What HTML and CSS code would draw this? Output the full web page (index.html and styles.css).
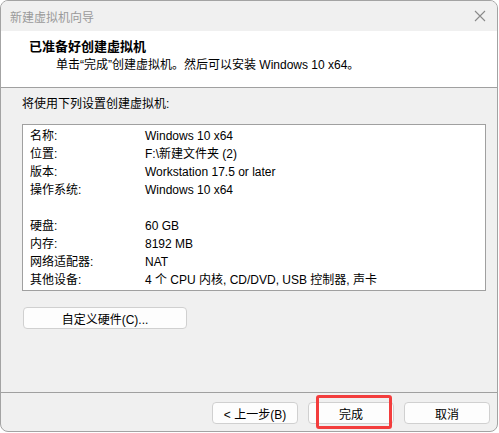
FILE: index.html
```html
<!DOCTYPE html>
<html lang="zh-CN">
<head>
<meta charset="utf-8">
<title>新建虚拟机向导</title>
<link rel="stylesheet" href="styles.css">
</head>
<body>
<div class="window">
  <div class="titlebar">
    <span class="title">新建虚拟机向导</span>
    <span class="close">
      <svg width="12" height="12" viewBox="0 0 12 12"><path d="M1 1 L11 11 M11 1 L1 11" stroke="#8a8a8a" stroke-width="1.1" fill="none"/></svg>
    </span>
  </div>
  <div class="header">
    <div class="h-title">已准备好创建虚拟机</div>
    <div class="h-sub">单击“完成”创建虚拟机。然后可以安装 Windows 10 x64。</div>
  </div>
  <div class="main">
    <div class="intro">将使用下列设置创建虚拟机:</div>
    <div class="summary">
      <div class="row"><span class="k">名称:</span><span class="v">Windows 10 x64</span></div>
      <div class="row"><span class="k">位置:</span><span class="v">F:\新建文件夹 (2)</span></div>
      <div class="row"><span class="k">版本:</span><span class="v">Workstation 17.5 or later</span></div>
      <div class="row"><span class="k">操作系统:</span><span class="v">Windows 10 x64</span></div>
      <div class="row"><span class="k"></span><span class="v"></span></div>
      <div class="row"><span class="k">硬盘:</span><span class="v">60 GB</span></div>
      <div class="row"><span class="k">内存:</span><span class="v">8192 MB</span></div>
      <div class="row"><span class="k">网络适配器:</span><span class="v">NAT</span></div>
      <div class="row"><span class="k">其他设备:</span><span class="v">4 个 CPU 内核, CD/DVD, USB 控制器, 声卡</span></div>
    </div>
    <button class="btn custom">自定义硬件(C)...</button>
  </div>
  <div class="footer">
    <button class="btn fbtn">&lt; 上一步(B)</button>
    <span class="mark-wrap">
      <button class="btn fbtn">完成</button>
      <span class="mark"></span>
    </span>
    <button class="btn fbtn">取消</button>
  </div>
</div>
</body>
</html>
```
FILE: styles.css
```css
html, body {
  margin: 0;
  padding: 0;
  background: #ffffff;
}
body {
  font-family: "Liberation Sans", "Noto Sans CJK SC", sans-serif;
  font-size: 12px;
  color: #000;
}
.window {
  width: 498px;
  height: 432px;
  box-sizing: border-box;
  border: 1px solid #a3a3a3;
  border-radius: 8px;
  overflow: hidden;
  background: #f0f0f0;
  display: flex;
  flex-direction: column;
}
.titlebar {
  height: 30px;
  flex: none;
  display: flex;
  align-items: center;
  justify-content: space-between;
  padding: 0 9px 0 9px;
  background: #f0f0f0;
}
.title {
  color: #9a9a9a;
  font-size: 12px;
}
.close {
  display: flex;
  width: 12px;
  height: 12px;
  margin-right: 2px;
}
.header {
  height: 56px;
  flex: none;
  background: #ffffff;
  border-bottom: 1px solid #a0a0a0;
  box-sizing: content-box;
}
.h-title {
  font-weight: bold;
  font-size: 13px;
  line-height: 18px;
  margin: 7px 0 0 28px;
}
.h-sub {
  line-height: 18px;
  margin-left: 55px;
}
.main {
  flex: 1;
  padding: 7px 11px 0 21px;
  display: flex;
  flex-direction: column;
  align-items: flex-start;
}
.intro {
  line-height: 18px;
}
.summary {
  align-self: stretch;
  margin-top: 11px;
  background: #ffffff;
  border: 1px solid #a0a0a0;
  padding: 2px 0 1px 0;
}
.row {
  display: flex;
  height: 18px;
  line-height: 18px;
}
.k {
  width: 115px;
  padding-left: 7px;
  flex: none;
}
.v {
  flex: 1;
}
.btn {
  font-family: "Liberation Sans", "Noto Sans CJK SC", sans-serif;
  font-size: 12px;
  color: #000;
  background: #fdfdfd;
  border: 1px solid #d0d0d0;
  border-radius: 4px;
  padding: 0;
  box-sizing: border-box;
}
.custom {
  margin-top: 16px;
  margin-left: 1px;
  width: 164px;
  height: 22px;
}
.footer {
  height: 39px;
  box-sizing: border-box;
  flex: none;
  border-top: 1px solid #a0a0a0;
  display: flex;
  justify-content: flex-end;
  align-items: flex-start;
  gap: 10px;
  padding: 9px 7px 0 0;
}
.fbtn {
  width: 86px;
  height: 22px;
}
.mark-wrap {
  position: relative;
  display: flex;
}
.mark {
  position: absolute;
  left: 8px;
  top: -7px;
  width: 76px;
  height: 34px;
  box-sizing: border-box;
  border: 3px solid #f33d3d;
  border-radius: 3px;
}
```
